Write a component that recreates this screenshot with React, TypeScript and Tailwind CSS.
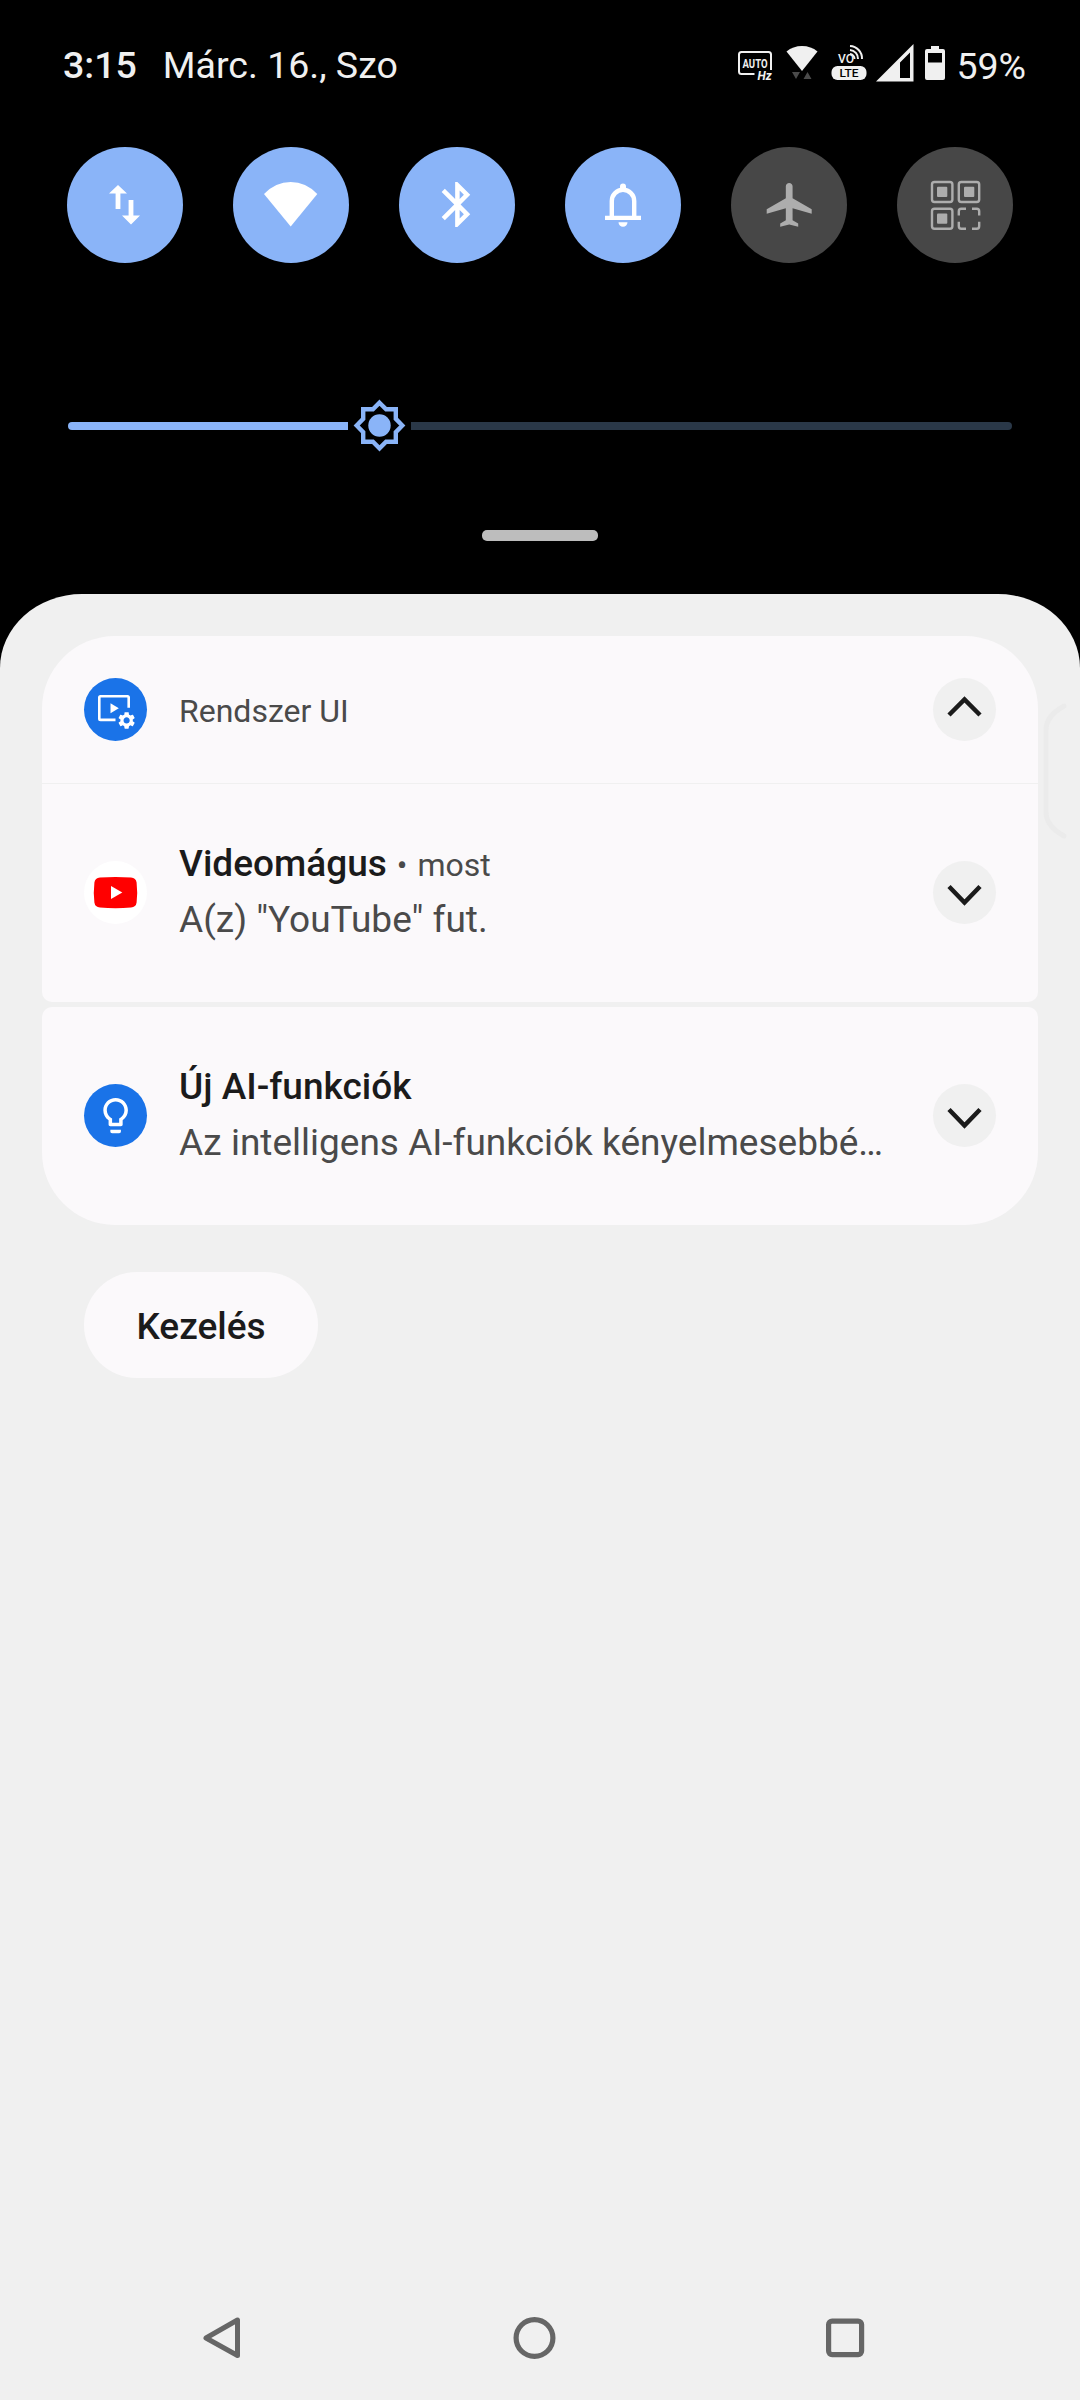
import type { ReactNode } from "react";

/* =========================
   QUICK SETTINGS DATA
========================= */
const tiles: { id: string; active: boolean; icon: ReactNode }[] = [
  {
    id: "data",
    active: true,
    icon: (
      <>
        <path d="M51 38l9 8.500h-6.600V62h-4.800V46.500H42z" />
        <path d="M64 77.500l-9-9h6.600V53h4.800v15.500H73z" />
      </>
    ),
  },
  {
    id: "wifi",
    active: true,
    icon: <path d="M57.700 79.500L31 47Q42.500 35 57.700 35T84.300 47z" />,
  },
  {
    id: "bluetooth",
    active: true,
    icon: (
      <path
        transform="translate(31.400 30.500) scale(2.25)"
        d="M17.710 7.710L12 2h-1v7.590L6.410 5 5 6.410 10.590 12 5 17.590 6.410 19 11 14.410V22h1l5.710-5.710-4.300-4.290 4.300-4.290zM13 5.830l1.880 1.880L13 9.590V5.830zm1.880 10.460L13 18.170v-3.760l1.880 1.880z"
      />
    ),
  },
  {
    id: "sound",
    active: true,
    icon: (
      <>
        <path d="M46.800 70V54a11.200 11.200 0 0 1 22.400 0v16" fill="none" stroke="currentColor" strokeWidth="4.400" />
        <path d="M55 43v-3.500a3 3 0 0 1 6 0V43z" />
        <path d="M40 68.700h36V73H40zM53.500 75.300h9a4.500 4.500 0 0 1-9 0z" />
      </>
    ),
  },
  {
    id: "airplane",
    active: false,
    icon: (
      <path
        transform="translate(31.200 31.600) scale(2.25 2.190)"
        d="M22 16v-2l-8.500-5V3.500c0-.83-.67-1.500-1.500-1.500s-1.500.67-1.500 1.500V9L2 14v2l8.500-2.500V19L8 20.500V22l4-1 4 1v-1.500L13.500 19v-5.500L22 16z"
      />
    ),
  },
  {
    id: "qr",
    active: false,
    icon: (
      <>
        <g fill="none" stroke="currentColor" strokeWidth="2.400">
          <rect x="35" y="35" width="20.400" height="20" rx="2.500" />
          <rect x="61.800" y="35" width="20.400" height="20" rx="2.500" />
          <rect x="35" y="61.700" width="20.400" height="20" rx="2.500" />
          <path d="M61.800 68.500v-4.300q0-2.500 2.500-2.500H69M75 61.700h4.700q2.500 0 2.500 2.500v4.300M82.200 74.700V79q0 2.700-2.500 2.700H75M69 81.700h-4.700q-2.500 0-2.500-2.700v-4.300" />
        </g>
        <rect x="40" y="39.700" width="10.300" height="10.300" rx="1" />
        <rect x="67" y="39.700" width="10.300" height="10.300" rx="1" />
        <rect x="40" y="66.500" width="10.300" height="10.300" rx="1" />
      </>
    ),
  },
];

/* =========================
   STATUS BAR ICONS
========================= */
function AutoHzIcon() {
  return (
    <svg width="36" height="40" className="ml-auto" fill="#f0f0f0">
      <path d="M17.500 30H4.500A2.500 2.500 0 0 1 2 27.500v-17A2.500 2.500 0 0 1 4.500 8h27a2.500 2.500 0 0 1 2.500 2.500V26" fill="none" stroke="#f0f0f0" strokeWidth="2" />
      <text x="18" y="23.500" textAnchor="middle" fontSize="12" fontWeight="700" textLength="25" lengthAdjust="spacingAndGlyphs">AUTO</text>
      <text x="20.500" y="35.500" fontSize="12" fontWeight="700" fontStyle="italic">Hz</text>
    </svg>
  );
}

function WifiStatusIcon() {
  return (
    <svg width="32" height="40" className="ml-[13px]" fill="#f0f0f0">
      <path d="M16 27L.5 7.500Q7 2 16 2t15.500 5.500z" />
      <path d="M6 28h8l-4 7zM17.500 35h8l-4-7z" fill="#4a4a4a" />
    </svg>
  );
}

function VolteIcon() {
  return (
    <svg width="36" height="40" className="ml-[13px]" fill="#f0f0f0">
      <text x="7" y="19" fontSize="13.500" fontWeight="500" textLength="16" lengthAdjust="spacingAndGlyphs">VO</text>
      <g fill="none" stroke="#f0f0f0" strokeWidth="2">
        <path d="M19 2a12.500 12.500 0 0 1 12 13" />
        <path d="M19 6a8.500 8.500 0 0 1 8 9" />
        <path d="M19 10a5 5 0 0 1 4.500 5" />
      </g>
      <rect x="0.500" y="22" width="35" height="14" rx="6" />
      <text x="18" y="33" textAnchor="middle" fontSize="11.500" fontWeight="500" fill="#000" textLength="19" lengthAdjust="spacingAndGlyphs">LTE</text>
    </svg>
  );
}

function SignalIcon() {
  return (
    <svg width="38" height="40" className="ml-[9px]" fill="#f0f0f0">
      <path fillRule="evenodd" d="M0 37.500L37.500 0v37.500zM24 18.500v15.500h10V8.500z" />
    </svg>
  );
}

function BatteryIcon() {
  return (
    <svg width="20" height="40" className="ml-[11px]" fill="#f0f0f0">
      <path fillRule="evenodd" d="M6 2h8v3h4a2 2 0 0 1 2 2v27a2 2 0 0 1-2 2H2a2 2 0 0 1-2-2V7a2 2 0 0 1 2-2h4zM3 9v9.500h14V9z" />
    </svg>
  );
}

/* =========================
   NOTIFICATION PIECES
========================= */
function ExpandButton({ open = false }: { open?: boolean }) {
  return (
    <button className="size-[63px] shrink-0 rounded-full bg-[#f0f0f0]">
      <svg width="63" height="63" fill="none" stroke="#1b1b1b" strokeWidth="4.500">
        <path d={open ? "M16 37l15.500-15.500L47 37" : "M16 25.500L31.500 41.500 47 25.500"} />
      </svg>
    </button>
  );
}

function ScreenSettingsIcon() {
  return (
    <svg width="63" height="63" className="shrink-0 rounded-full bg-[#1a73e8]" fill="#fff">
      <path d="M31.500 41.900H16.500q-1.200 0-1.200-1.200V19.500q0-1.200 1.200-1.200h27q1.200 0 1.200 1.200v10.200" fill="none" stroke="#fff" strokeWidth="2.600" />
      <path d="M26.500 25.300v10l8.300-5z" />
      <path
        transform="translate(32.300 32.100) scale(0.86)"
        d="M19.140 12.940c.04-.3.060-.61.060-.94 0-.32-.02-.64-.07-.94l2.030-1.580c.18-.14.23-.41.120-.61l-1.920-3.320c-.12-.22-.37-.29-.59-.22l-2.390.96c-.5-.38-1.030-.7-1.620-.94l-.36-2.540c-.04-.24-.24-.41-.48-.41h-3.840c-.24 0-.43.170-.47.410l-.36 2.540c-.59.240-1.130.570-1.620.940l-2.390-.96c-.22-.08-.47 0-.59.220L2.740 8.870c-.12.210-.08.470.120.610l2.030 1.580c-.05.300-.09.630-.09.940s.02.640.070.940l-2.030 1.580c-.18.140-.23.410-.12.610l1.920 3.320c.12.220.370.290.590.220l2.390-.96c.5.380 1.030.7 1.620.940l.36 2.540c.05.240.240.410.480.410h3.840c.24 0 .44-.17.470-.41l.36-2.540c.59-.24 1.130-.56 1.620-.94l2.390.96c.22.080.470 0 .59-.22l1.920-3.320c.12-.22.070-.47-.12-.61l-2.010-1.580zM12 15.600c-1.980 0-3.600-1.620-3.600-3.600s1.620-3.600 3.600-3.600 3.600 1.620 3.600 3.600-1.620 3.600-3.600 3.600z"
      />
    </svg>
  );
}

function YoutubeIcon() {
  return (
    <svg width="63" height="63" className="shrink-0 rounded-full bg-white">
      <path d="M16 16.600q15.500-1.200 31 0 5 .4 5.600 5 1.200 10 0 20-.6 4.600-5.600 5-15.500 1.200-31 0-5-.4-5.600-5-1.200-10 0-20 .6-4.600 5.600-5z" fill="#f00" />
      <path d="M27 25v13l11.300-6.500z" fill="#fff" />
    </svg>
  );
}

function BulbIcon() {
  return (
    <svg width="63" height="63" className="shrink-0 rounded-full bg-[#1a73e8]" fill="#fff">
      <path
        transform="translate(10.500 10.500) scale(1.760)"
        d="M9 21c0 .5.400 1 1 1h4c.6 0 1-.5 1-1v-1H9v1zm3-19C8.100 2 5 5.100 5 9c0 2.400 1.200 4.500 3 5.700V17c0 .5.400 1 1 1h6c.6 0 1-.5 1-1v-2.300c1.800-1.300 3-3.400 3-5.700 0-3.900-3.100-7-7-7zm2.900 11.100l-.9.6V16h-4v-2.300l-.9-.6C7.800 12.200 7 10.600 7 9c0-2.800 2.200-5 5-5s5 2.200 5 5c0 1.600-.8 3.200-2.100 4.100z"
      />
    </svg>
  );
}

type NotificationProps = {
  icon: ReactNode;
  title: string;
  time?: string;
  text: string;
};

function Notification({ icon, title, time, text }: NotificationProps) {
  return (
    <div className="flex h-[218px] items-center px-[42px] pb-px">
      {icon}
      <div className="mb-px ml-8 min-w-0 flex-1 whitespace-nowrap text-[37px] leading-[56px] text-[#4a4a4a]">
        <div className="flex h-14 items-baseline">
          <h3 className="font-medium text-[#1b1b1b]">{title}</h3>
          {time && (
            <>
              <span className="mx-[10px] text-[31.5px]">•</span>
              <span className="text-[32px]">{time}</span>
            </>
          )}
        </div>
        <p>{text}</p>
      </div>
      <ExpandButton />
    </div>
  );
}

export default function App() {
  return (
    <div className="relative flex h-[2400px] w-[1080px] flex-col overflow-hidden bg-black font-['Roboto',sans-serif]">
      {/* STATUS BAR */}
      <header className="flex h-32 items-center pl-[63px] pr-[54px] text-[37.5px] text-[#f0f0f0]">
        <span className="pt-0.5 font-medium">3:15</span>
        <span className="ml-[26px] pt-0.5">Márc. 16., Szo</span>
        <AutoHzIcon />
        <WifiStatusIcon />
        <VolteIcon />
        <SignalIcon />
        <BatteryIcon />
        <span className="ml-[11px] pt-1">59%</span>
      </header>

      {/* QUICK SETTINGS */}
      <div className="mt-[19px] flex justify-between px-[67px]">
        {tiles.map((tile) => (
          <button
            key={tile.id}
            className={`size-[116px] rounded-full ${
              tile.active ? "bg-[#8ab4f8] text-white" : "bg-[#474747] text-[#adadad]"
            }`}
          >
            <svg width="116" height="116" fill="currentColor">
              {tile.icon}
            </svg>
          </button>
        ))}
      </div>

      {/* BRIGHTNESS */}
      <div className="mt-[135px] flex h-14 items-center px-[68px]">
        <div className="h-2 w-[280px] rounded-l-full bg-[#8ab4f8]" />
        <svg width="63" height="56" viewBox="-31.500 -27.500 63 56" fill="#8ab4f8">
          <path
            d="M0-22.800L6.600-16.300H16.300V-6.600L22.800 0 16.300 6.600V16.300H6.600L0 22.800-6.600 16.300H-16.300V6.600L-22.800 0-16.300-6.600V-16.300H-6.600z"
            fill="none"
            stroke="#8ab4f8"
            strokeWidth="4.400"
          />
          <circle r="11.200" />
        </svg>
        <div className="h-2 flex-1 rounded-r-full bg-[#2a3848]" />
      </div>
      <div className="mx-auto mt-[76px] h-[11px] w-[116px] rounded-[5px] bg-[#bdbdbd]" />

      {/* NOTIFICATION SHADE */}
      <main className="mt-[53px] flex flex-1 flex-col rounded-t-[82px_74px] bg-[#f0f0f0] px-[42px] pt-[42px]">
        <section className="rounded-b-[10px] rounded-t-[73px] bg-[#fbf9fb]">
          <div className="flex h-[148px] items-center border-b border-[#f0f0f0] px-[42px]">
            <ScreenSettingsIcon />
            <span className="ml-8 flex-1 pt-[3px] text-[32px]">
              <span className="text-[#4a4a4a]">Rendszer UI</span>
            </span>
            <ExpandButton open />
          </div>
          <Notification
            icon={<YoutubeIcon />}
            title="Videomágus"
            time="most"
            text={'A(z) "YouTube" fut.'}
          />
        </section>

        <section className="mt-[5px] rounded-b-[73px] rounded-t-[10px] bg-[#fbf9fb]">
          <Notification
            icon={<BulbIcon />}
            title="Új AI-funkciók"
            text="Az intelligens AI-funkciók kényelmesebbé…"
          />
        </section>

        <button className="ml-[42px] mt-[47px] h-[106px] w-[234px] rounded-full bg-[#fbf9fb] pt-[3px] text-[37px] font-medium text-[#1b1b1b]">
          Kezelés
        </button>

        {/* NAVIGATION BAR */}
        <nav className="mt-auto flex h-[125px] items-center justify-between pl-[156px] pr-[169px]">
          <svg width="48" height="48" fill="none" stroke="#666" strokeWidth="5" strokeLinejoin="round">
            <path d="M39.500 6v35.500L8 24z" />
          </svg>
          <svg width="48" height="48" fill="none" stroke="#666" strokeWidth="5.200">
            <circle cx="24.500" cy="24" r="18.400" />
          </svg>
          <svg width="48" height="48" fill="none" stroke="#666" strokeWidth="5.200">
            <rect x="7.600" y="7.100" width="33" height="33.500" rx="3.500" />
          </svg>
        </nav>
      </main>

      {/* edge panel handle */}
      <svg className="absolute left-[1040px] top-[700px]" width="30" height="142" fill="none" stroke="#ebebeb" strokeWidth="5" strokeLinecap="round">
        <path d="M24 6Q6 16 6 30v82q0 14 18 24" />
      </svg>
    </div>
  );
}
